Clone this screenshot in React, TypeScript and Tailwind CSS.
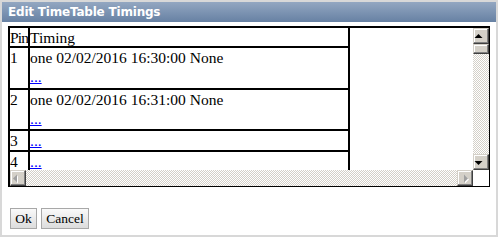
import React from "react";

function ArrowBtn({ dir, disabled }: { dir: "up" | "down" | "left" | "right"; disabled?: boolean }) {
  const fill = disabled ? "#a0a0a0" : "#000000";
  let pts = "";
  if (dir === "up") pts = "4.5,5 8.5,9 0.5,9";
  if (dir === "down") pts = "0.5,6 8.5,6 4.5,10";
  if (dir === "left") pts = "6,3.5 6,11.5 2,7.5";
  if (dir === "right") pts = "6,3.5 6,11.5 10,7.5";
  return (
    <div className="w-[16px] h-[16px] shrink-0 bg-[#d4d0c8] border border-t-[#d4d0c8] border-l-[#d4d0c8] border-r-[#404040] border-b-[#404040] shadow-[inset_-1px_-1px_#808080,inset_1px_1px_#ffffff] flex items-center justify-center">
      <svg width="14" height="14" viewBox="0 0 14 14" className="block">
        {disabled && dir === "right" && <polygon points="7,4.5 7,12.5 11,8.5" fill="#ffffff" />}
        {disabled && dir === "left" && <polygon points="7,4.5 7,12.5 3,8.5" fill="#ffffff" />}
        <polygon points={pts} fill={fill} />
      </svg>
    </div>
  );
}

function Link() {
  return <span className="text-[#0000ff] underline">...</span>;
}

export default function App() {
  return (
    <div className="w-[498px] h-[237px] border-2 border-[#d8d8d8] bg-white flex flex-col font-['Liberation_Serif','Times_New_Roman',serif]">
      <div className="h-[20px] shrink-0 bg-gradient-to-b from-[#93a7c1] to-[#6781a3] flex items-center pl-[6px]">
        <span className="text-white font-bold text-[12px] tracking-[-0.2px] font-['DejaVu_Sans','Verdana',sans-serif] leading-none">
          Edit TimeTable Timings
        </span>
      </div>
      <div className="flex-1 flex flex-col pt-[4px] px-[6px]">
        <div className="w-[482px] h-[161px] border-black border-t-2 border-l-2 border-r border-b flex flex-col">
          <div className="flex flex-1 min-h-0">
            <div className="flex-1 overflow-hidden">
              <div className="grid grid-cols-[20px_320px] text-[15.5px] leading-[19px] text-black">
                <div className="h-[20px] border-r-2 border-b-2 border-black tracking-[-0.8px] overflow-hidden whitespace-nowrap">Pin</div>
                <div className="h-[20px] border-r-2 border-b-2 border-black">Timing</div>

                <div className="h-[42px] border-r-2 border-b-2 border-black">1</div>
                <div className="h-[42px] border-r-2 border-b-2 border-black">
                  <div>one 02/02/2016 16:30:00 None</div>
                  <div><Link /></div>
                </div>

                <div className="h-[41px] border-r-2 border-b-2 border-black">2</div>
                <div className="h-[41px] border-r-2 border-b-2 border-black">
                  <div>one 02/02/2016 16:31:00 None</div>
                  <div><Link /></div>
                </div>

                <div className="h-[21px] border-r-2 border-b-2 border-black">3</div>
                <div className="h-[21px] border-r-2 border-b-2 border-black"><Link /></div>

                <div className="h-[21px] border-r-2 border-b-2 border-black">4</div>
                <div className="h-[21px] border-r-2 border-b-2 border-black"><Link /></div>
              </div>
            </div>
            <div className="w-[16px] shrink-0 flex flex-col">
              <ArrowBtn dir="up" />
              <div className="h-[10px] shrink-0 bg-[#d4d0c8] border border-t-[#d4d0c8] border-l-[#d4d0c8] border-r-[#404040] border-b-[#404040] shadow-[inset_-1px_-1px_#808080,inset_1px_1px_#ffffff]" />
              <div className="flex-1 bg-[image:conic-gradient(#d4d0c8_25%,#ffffff_0_50%,#d4d0c8_0_75%,#ffffff_0)] bg-[length:2px_2px]" />
              <ArrowBtn dir="down" />
            </div>
          </div>
          <div className="h-[16px] shrink-0 flex">
            <ArrowBtn dir="left" disabled />
            <div className="flex-1 bg-[image:conic-gradient(#d4d0c8_25%,#ffffff_0_50%,#d4d0c8_0_75%,#ffffff_0)] bg-[length:2px_2px]" />
            <ArrowBtn dir="right" disabled />
            <div className="w-[16px] shrink-0 bg-white" />
          </div>
        </div>
        <div className="mt-[21px] flex gap-[4px] pl-[2px]">
          <button className="h-[21px] w-[27px] border border-[#a8a8a8] bg-gradient-to-b from-[#fafafa] to-[#dcdcdc] text-[13.5px] leading-none text-black flex items-center justify-center">
            Ok
          </button>
          <button className="h-[21px] w-[48px] border border-[#a8a8a8] bg-gradient-to-b from-[#fafafa] to-[#dcdcdc] text-[13.5px] leading-none text-black flex items-center justify-center">
            Cancel
          </button>
        </div>
      </div>
    </div>
  );
}
